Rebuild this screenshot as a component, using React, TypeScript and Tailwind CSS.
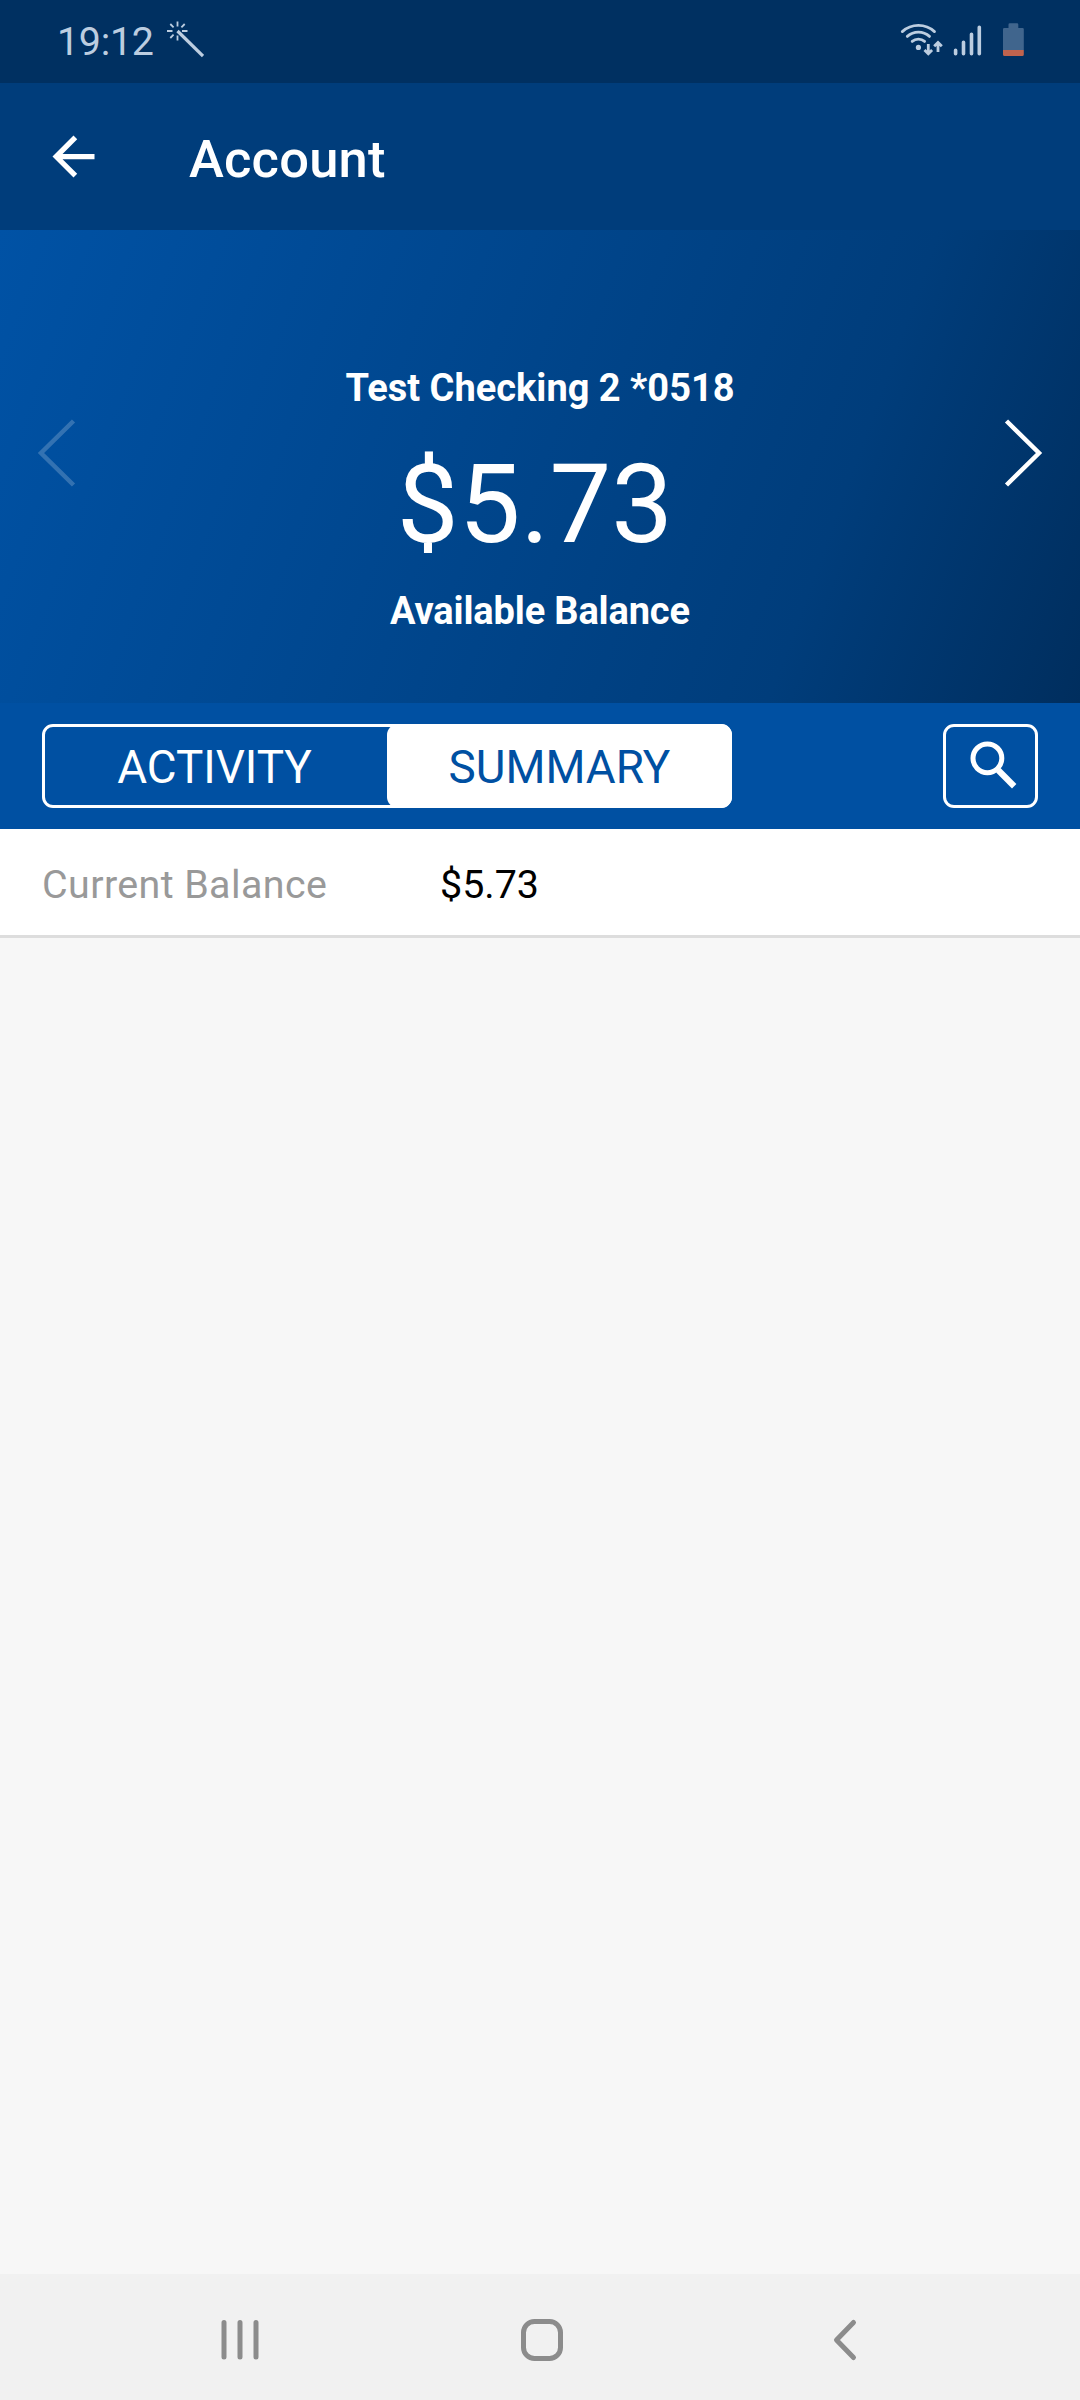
import React, { useState } from 'react'
import { MdArrowBack } from 'react-icons/md'

type Tab = 'ACTIVITY' | 'SUMMARY'

const tabs: Tab[] = ['ACTIVITY', 'SUMMARY']

const summaryRows = [{ label: 'Current Balance', value: '$5.73' }]

const StatusBar: React.FC = () => (
  <div className="h-[83px] flex items-center justify-between bg-[#003061] pl-[57px] pr-[56px] text-[#bccde0]">
    <div className="flex items-center">
      <span className="text-[39.4px] tracking-[-0.3px] leading-none">19:12</span>
      <svg className="w-[38px] h-[38px] ml-[12px] -mt-1" viewBox="0 0 38 38" fill="none" stroke="currentColor" strokeWidth="1.8">
        <path d="M11.5 0.5v5M11.5 14.5v5M1 10h5.500M16 10h5.500M4.300 3l3.300 3.300M18.700 3l-3.300 3.300M4.300 17l3.300-3.300" />
        <path d="M11.500 10L37 35" strokeWidth="3.2" />
      </svg>
    </div>
    <div className="flex items-center -mt-[3px]">
      <svg className="w-[124px] h-[36px]" viewBox="900 22 124 36" fill="none" stroke="#bccde0">
        <g strokeWidth="2.8" strokeLinecap="round">
          <path d="M902.3 31.6a24 24 0 0 1 32.2 0" />
          <path d="M907.3 36.4a16.5 16.5 0 0 1 22.2 0" />
          <path d="M912.2 41.4a9.4 9.4 0 0 1 12.4 0" />
        </g>
        <circle cx="918.4" cy="47.4" r="2.6" fill="#bccde0" stroke="none" />
        <path d="M928.3 44v9M924.5 50l3.8 3.8 3.8-3.8M938 52v-9M934.2 46.3l3.8-3.8 3.8 3.8" strokeWidth="2.8" />
        <path d="M955.6 50.3v3.4M963.5 42.3v11.4M971.5 34.3v19.4M979.3 27.3v26.4" strokeWidth="3.6" strokeLinecap="round" />
        <path d="M1008.5 28v-3.5a1.3 1.3 0 0 1 1.3-1.3h7.2a1.3 1.3 0 0 1 1.3 1.3V28h4.2a1.3 1.3 0 0 1 1.3 1.3V50H1003V29.3a1.3 1.3 0 0 1 1.3-1.3z" fill="#40658d" stroke="none" />
        <path d="M1003 50h20.8v4.5a1.5 1.5 0 0 1-1.5 1.5h-17.8a1.5 1.5 0 0 1-1.5-1.5z" fill="#bf634e" stroke="none" />
      </svg>
    </div>
  </div>
)

const AppBar: React.FC = () => (
  <header className="h-[147px] flex items-center bg-[#003d7b] pl-[42px] text-white">
    <MdArrowBack className="w-[63px] h-[63px]" />
    <h1 className="ml-[84px] mt-[5px] text-[52.5px] tracking-[0.2px] font-medium leading-none">Account</h1>
  </header>
)

const NavBar: React.FC = () => (
  <nav className="h-[126px] bg-[#f1f1f1]">
    <svg className="w-full h-full" viewBox="0 0 1080 126" fill="none" stroke="#8c8c8c" strokeWidth="5" strokeLinecap="round">
      <path d="M224 48.5v34.5M240 48.5v34.5M256 48.5v34.5" />
      <rect x="523.5" y="47.5" width="37" height="37" rx="11" />
      <path d="M853.5 48.5L836.5 66L853.5 83.500" strokeLinejoin="round" />
    </svg>
  </nav>
)

const App: React.FC = () => {
  const [active, setActive] = useState<Tab>('SUMMARY')

  return (
    <div className="w-[1080px] h-[2400px] flex flex-col bg-[#f7f7f7] font-[Roboto,sans-serif]">
      <StatusBar />
      <AppBar />

      {/* Account carousel */}
      <section className="h-[473px] flex justify-between bg-[linear-gradient(110deg,#0052a5_0%,#003d7b_75%,#002e5e_100%)] px-[37px] text-white">
        <svg className="w-[40px] h-[70px] mt-[188px] opacity-20" viewBox="0 0 40 70" fill="none" stroke="currentColor" strokeWidth="4.5">
          <path d="M36.5 3L4 35L36.5 67" />
        </svg>
        <div className="flex flex-col items-center">
          <p className="mt-[138px] text-[38px] font-bold leading-[40px]">Test Checking 2 *0518</p>
          <p className="mt-[42px] pr-[10px] text-[110px] leading-[110px]">$5.73</p>
          <p className="mt-[31px] text-[38px] tracking-[-0.15px] font-bold leading-[40px]">Available Balance</p>
        </div>
        <svg className="w-[40px] h-[70px] mt-[188px]" viewBox="0 0 40 70" fill="none" stroke="currentColor" strokeWidth="4.5">
          <path d="M3.5 3L36 35L3.5 67" />
        </svg>
      </section>

      {/* Tabs and search */}
      <div className="h-[126px] flex items-center justify-between bg-[#0050a2] px-[42px]">
        <div className="relative w-[690px] h-[84px] flex">
          <div className="absolute inset-0 rounded-[11px] border-3 border-white" />
          {tabs.map((tab) => (
            <button
              key={tab}
              onClick={() => setActive(tab)}
              className={`relative flex-1 rounded-[11px] pt-[3px] text-[45.8px] leading-none ${active === tab ? 'bg-white text-[#0050a2]' : 'text-white'}`}
            >
              {tab}
            </button>
          ))}
        </div>
        <button className="w-[95px] h-[84px] rounded-[11px] border-3 border-white text-white">
          <svg className="w-full h-full" viewBox="0 0 89 78" fill="none" stroke="currentColor">
            <circle cx="41.4" cy="31.3" r="14.4" strokeWidth="5" />
            <path d="M54.5 45.5L66 57" strokeWidth="6.2" strokeLinecap="square" />
          </svg>
        </button>
      </div>

      {/* Summary */}
      <div className="flex-1">
        {summaryRows.map((row) => (
          <div key={row.label} className="h-[109px] flex items-center bg-white border-b-3 border-[#dddddd] px-[42px] pt-[5px] text-[39.4px] leading-none">
            <span className="w-[398px] tracking-[0.4px] text-[#999999]">{row.label}</span>
            <span className="text-black">{row.value}</span>
          </div>
        ))}
      </div>

      <NavBar />
    </div>
  )
}

export default App
